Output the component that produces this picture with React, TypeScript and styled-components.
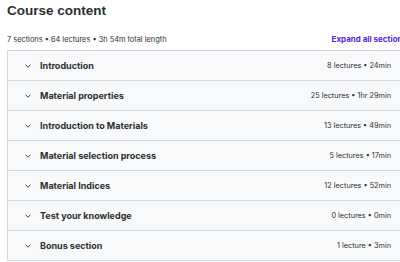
import React from "react";
import styled, { createGlobalStyle } from "styled-components";

const Global = createGlobalStyle`
  html, body { margin: 0; padding: 0; background: #fff; overflow: hidden; }
  body { font-family: Inter, "Noto Sans", sans-serif; color: #2d2f31; }
`;

const Page = styled.div`
  width: 420px;
  padding: 3px 0 0 7px;
  box-sizing: border-box;
`;

const Title = styled.h2`
  margin: 0;
  font-family: "Liberation Sans", Arial, sans-serif;
  font-size: 13.5px;
  font-weight: 700;
  line-height: 16px;
  color: #2d2f31;
`;

const Meta = styled.div`
  display: flex;
  justify-content: space-between;
  align-items: center;
  margin-top: 14px;
  height: 12px;
  width: 400px;
`;

const Summary = styled.span`
  font-size: 7.4px;
  color: #2d2f31;
`;

const Expand = styled.span`
  font-size: 8px;
  font-weight: 700;
  color: #5624d0;
  white-space: nowrap;
`;

const List = styled.div`
  margin-top: 5px;
  width: 400px;
  border: 1px solid #d1d7dc;
  border-right: none;
  background: #f7f9fa;
`;

const Row = styled.div<{ $last?: boolean }>`
  display: flex;
  align-items: center;
  height: 29px;
  padding: 0 17px 0 17px;
  border-bottom: ${(p) => (p.$last ? "none" : "1px solid #d1d7dc")};
`;

const Chevron = styled.svg`
  width: 6px;
  height: 6px;
  margin-right: 9px;
  flex: none;
`;

const Name = styled.span`
  flex: 1;
  font-size: 9px;
  font-weight: 700;
  color: #2d2f31;
`;

const Info = styled.span`
  font-size: 7.3px;
  color: #2d2f31;
`;

const sections = [
  ["Introduction", "8 lectures • 24min"],
  ["Material properties", "25 lectures • 1hr 29min"],
  ["Introduction to Materials", "13 lectures • 49min"],
  ["Material selection process", "5 lectures • 17min"],
  ["Material Indices", "12 lectures • 52min"],
  ["Test your knowledge", "0 lectures • 0min"],
  ["Bonus section", "1 lecture • 3min"],
];

export default function App() {
  return (
    <>
      <Global />
      <Page>
        <Title>Course content</Title>
        <Meta>
          <Summary>7 sections • 64 lectures • 3h 54m total length</Summary>
          <Expand>Expand all sections</Expand>
        </Meta>
        <List>
          {sections.map(([n, i], idx) => (
            <Row key={n} $last={idx === sections.length - 1}>
              <Chevron viewBox="0 0 6 6">
                <path d="M0.8 2 L3 4.2 L5.2 2" fill="none" stroke="#2d2f31" strokeWidth="0.9" strokeLinecap="round" strokeLinejoin="round" />
              </Chevron>
              <Name>{n}</Name>
              <Info>{i}</Info>
            </Row>
          ))}
        </List>
      </Page>
    </>
  );
}
